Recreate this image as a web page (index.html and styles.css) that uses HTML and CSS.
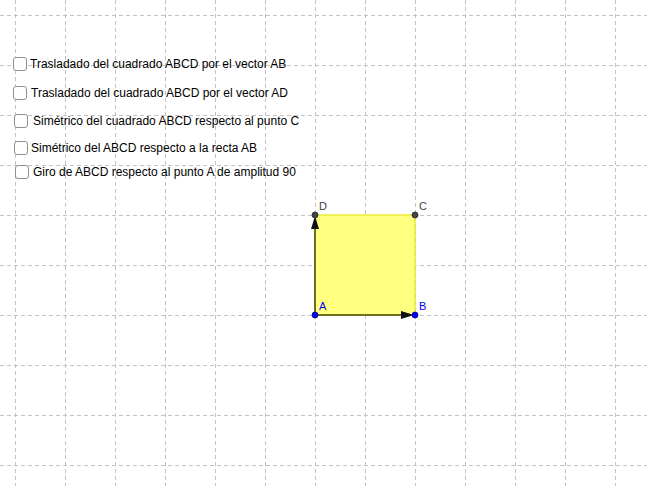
FILE: index.html
```html
<!DOCTYPE html>
<html lang="es">
<head>
<meta charset="utf-8">
<title>Transformaciones del cuadrado ABCD</title>
<link rel="stylesheet" href="styles.css">
</head>
<body>
<div class="canvas">
  <svg class="graphics" width="647" height="486" viewBox="0 0 647 486" xmlns="http://www.w3.org/2000/svg">
    <g class="grid" stroke="#c3c3c3" stroke-width="1" stroke-dasharray="4 3" fill="none">
      <path d="M15.5 0V486M65.5 0V486M115.5 0V486M165.5 0V486M215.5 0V486M265.5 0V486M315.5 0V486M365.5 0V486M415.5 0V486M465.5 0V486M515.5 0V486M565.5 0V486M615.5 0V486"/>
      <path d="M0 15.5H647M0 65.5H647M0 115.5H647M0 165.5H647M0 215.5H647M0 265.5H647M0 315.5H647M0 365.5H647M0 415.5H647M0 465.5H647"/>
    </g>
    <polygon points="315,315 415,315 415,215 315,215" fill="#ffff80" stroke="#ecec3a" stroke-width="1.5"/>
    <line x1="315" y1="315" x2="404" y2="315" stroke="#6e6e1e" stroke-width="2"/>
    <polygon points="414,315 401,311 401,319" fill="#111"/>
    <line x1="315" y1="315" x2="315" y2="226" stroke="#6e6e1e" stroke-width="2"/>
    <polygon points="315,216 311,229 319,229" fill="#111"/>
    <circle cx="315" cy="215" r="3" fill="#444" stroke="#222" stroke-width="0.8"/>
    <circle cx="415" cy="215" r="3" fill="#444" stroke="#222" stroke-width="0.8"/>
    <circle cx="315" cy="315" r="3" fill="#0000ff" stroke="#000080" stroke-width="0.8"/>
    <circle cx="415" cy="315" r="3" fill="#0000ff" stroke="#000080" stroke-width="0.8"/>
    <g font-family="Liberation Sans, Arial, sans-serif" font-size="11">
      <text x="319" y="210" fill="#444">D</text>
      <text x="419" y="210" fill="#444">C</text>
      <text x="319" y="310" fill="#0000ff">A</text>
      <text x="419" y="310" fill="#0000ff">B</text>
    </g>
  </svg>
  <div class="options">
    <label class="opt opt1"><span class="box"></span><span class="txt">Trasladado del cuadrado ABCD por el vector AB</span></label>
    <label class="opt opt2"><span class="box"></span><span class="txt">Trasladado del cuadrado ABCD por el vector AD</span></label>
    <label class="opt opt3"><span class="box"></span><span class="txt">Simétrico del cuadrado ABCD respecto al punto C</span></label>
    <label class="opt opt4"><span class="box"></span><span class="txt">Simétrico del ABCD respecto a la recta AB</span></label>
    <label class="opt opt5"><span class="box"></span><span class="txt">Giro de ABCD respecto al punto A de amplitud 90</span></label>
  </div>
</div>
</body>
</html>
```
FILE: styles.css
```css
html, body {
  margin: 0;
  padding: 0;
  background: #ffffff;
}
.canvas {
  position: relative;
  width: 647px;
  height: 486px;
  overflow: hidden;
  background: #ffffff;
  font-family: "Liberation Sans", Arial, sans-serif;
  font-size: 12px;
  color: #000;
}
.graphics {
  position: absolute;
  left: 0;
  top: 0;
  display: block;
}
.options {
  position: relative;
  display: flex;
  flex-direction: column;
  align-items: flex-start;
  padding-top: 57px;
}
.opt {
  display: flex;
  align-items: center;
  gap: 3px;
  height: 14px;
  line-height: 14px;
}
.box {
  box-sizing: border-box;
  width: 14px;
  height: 14px;
  border: 1.5px solid #8f8f8f;
  border-radius: 3px;
  background: #ffffff;
  flex: none;
}
.txt {
  white-space: nowrap;
}
.opt1 { margin-left: 13px; }
.opt2 { margin-left: 13px; margin-top: 15px; }
.opt2 .txt { margin-left: 1px; }
.opt3 { margin-left: 14px; margin-top: 14px; }
.opt3 .txt { margin-left: 2px; }
.opt4 { margin-left: 14px; margin-top: 13px; }
.opt5 { margin-left: 15px; margin-top: 10px; }
.opt5 .txt { margin-left: 1px; }
```
